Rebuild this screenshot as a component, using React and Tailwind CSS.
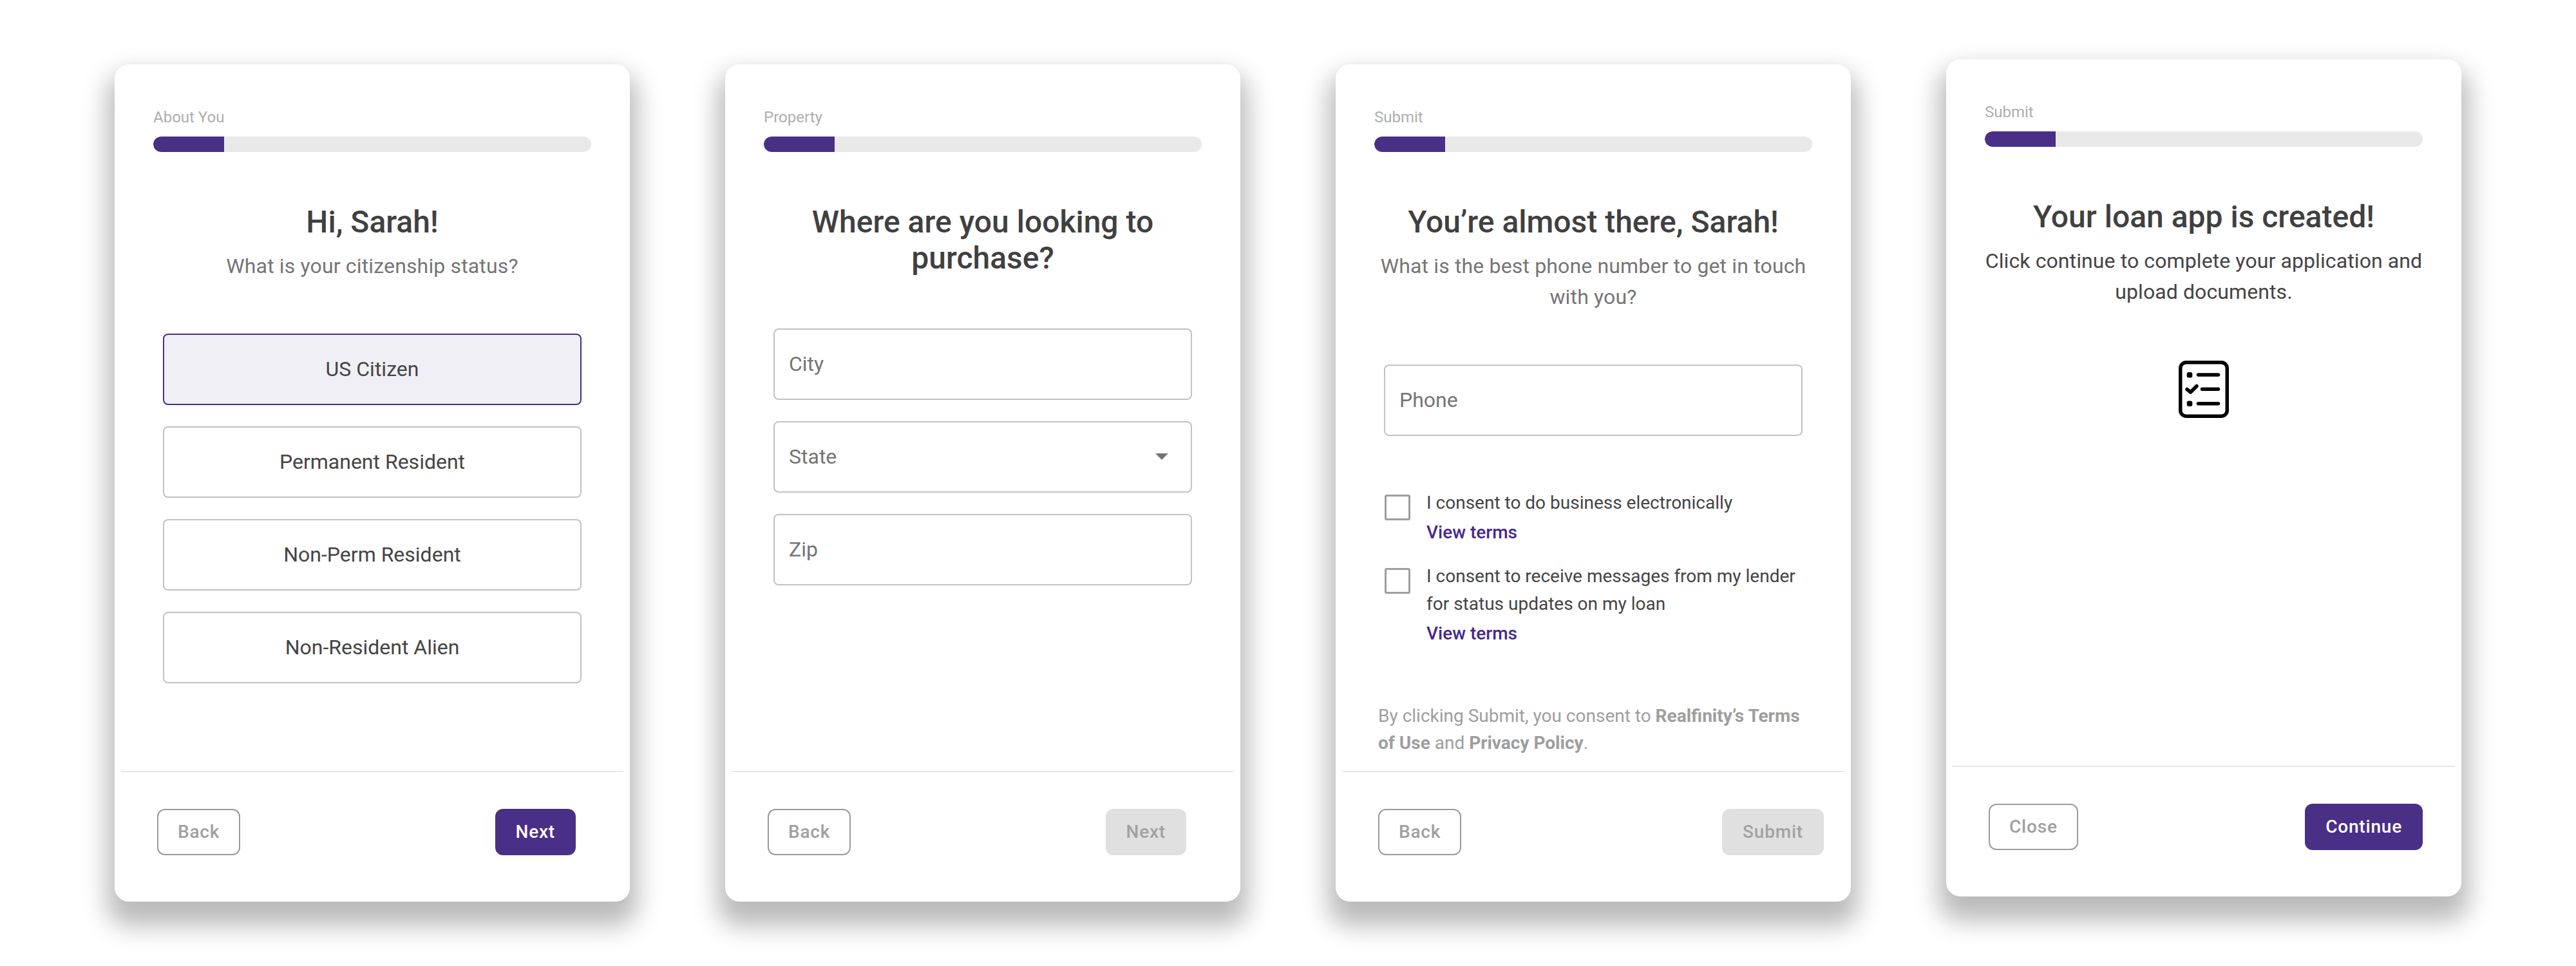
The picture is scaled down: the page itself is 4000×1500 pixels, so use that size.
import React from "react";

const Progress = ({ label }) => (
  <div>
    <div className="h-8 text-[24px] leading-8 text-[#aeaeae]">{label}</div>
    <div className="mt-[14px] h-6 w-full overflow-hidden rounded-xl bg-[#e9e9e9]">
      <div className="h-full w-[110px] rounded-l-xl bg-[#4a2f87]" />
    </div>
  </div>
);

const Heading = ({ title, children, sub = "text-[#757575] tracking-[0.15px]" }) => (
  <div className="mt-[81px] text-center">
    <h1 className="text-[48px] leading-[56px] font-medium text-[#404040]">{title}</h1>
    <p className={`mt-4 text-[32px] leading-[48px] ${sub}`}>{children}</p>
  </div>
);

const Option = ({ children, selected }) => (
  <div
    className={`flex h-[111px] items-center justify-center rounded-lg border-2 pb-0.5 text-[32px] text-[#444444] ${
      selected ? "border-[#4a2f87] bg-[#efeff5]" : "border-[#c2c2c2] bg-white"
    }`}
  >
    {children}
  </div>
);

const Field = ({ children, arrow }) => (
  <div className="flex h-[111px] items-center justify-between rounded-lg border-2 border-[#c2c2c2] pr-[35px] pb-0.5 pl-[22px] text-[32px] text-[#757575]">
    <span>{children}</span>
    {arrow && <span className="h-0 w-0 border-x-[10px] border-t-[10px] border-x-transparent border-t-[#757575]" />}
  </div>
);

const Consent = ({ lines }) => (
  <div className="flex gap-[25px]">
    <div className="mt-[6px] h-10 w-10 shrink-0 rounded-[3px] border-[3px] border-[#9e9e9e]" />
    <div className="-mt-[3px] text-[28px] leading-[43px] text-[#444444]">
      {lines.map((l) => (
        <div key={l}>{l}</div>
      ))}
      <div className="mt-[3px] font-medium text-[#45288c]">View terms</div>
    </div>
  </div>
);

const Footer = ({ left = "Back", right, kind = "primary", rightClass }) => (
  <div>
    <div className="mx-[10px] h-[2px] bg-[#e8e8e8]" />
    <div className={`mt-[57px] mb-[72px] flex items-center justify-between pl-[66px] ${rightClass}`}>
      <button className="flex h-[72px] items-center rounded-xl border-2 border-[#9b9b9b] px-[30px] text-[28px] font-medium tracking-[0.8px] text-[#a0a0a0]">
        {left}
      </button>
      <button
        className={`flex h-[72px] items-center rounded-xl px-8 text-[28px] font-medium tracking-[0.8px] ${
          kind === "primary" ? "bg-[#4a2f87] text-white" : "bg-[#e0e0e0] text-[#a2a2a2]"
        }`}
      >
        {right}
      </button>
    </div>
  </div>
);

const Card = ({ children, className = "" }) => (
  <div
    className={`flex h-[1300px] w-[800px] shrink-0 flex-col rounded-[22px] bg-white pt-[66px] shadow-[0_26px_38px_12px_rgba(0,0,0,0.27)] ${className}`}
  >
    {children}
  </div>
);

const ChecklistIcon = () => (
  <svg viewBox="0 0 78 89" className="h-[89px] w-[78px]" fill="none" stroke="#000" strokeLinecap="round" strokeLinejoin="round">
    <rect x="2.75" y="2.75" width="72.5" height="83.5" rx="9" strokeWidth="5.5" />
    <rect x="12.7" y="18" width="8.6" height="8.6" rx="3" fill="#000" stroke="none" />
    <rect x="12.7" y="62.5" width="8.6" height="8.6" rx="3" fill="#000" stroke="none" />
    <path d="M30.5 22h31M36.5 44.3h25M30.5 66.7h31" strokeWidth="5.5" />
    <path d="M13 44.5l5.5 4.5 9.5-9.5" strokeWidth="5.5" />
  </svg>
);

export default function App() {
  return (
    <div className="flex min-h-[1500px] w-[4000px] items-start gap-[148px] bg-white pt-[100px] pl-[178px] font-[Roboto,sans-serif]">
      <Card>
        <div className="flex-1 px-[60px]">
          <Progress label="About You" />
          <Heading title="Hi, Sarah!">What is your citizenship status?</Heading>
          <div className="mx-[15px] mt-[81px] flex flex-col gap-[33px]">
            <Option selected>US Citizen</Option>
            <Option>Permanent Resident</Option>
            <Option>Non-Perm Resident</Option>
            <Option>Non-Resident Alien</Option>
          </div>
        </div>
        <Footer right="Next" rightClass="pr-[84px]" />
      </Card>

      <Card>
        <div className="flex-1 px-[60px]">
          <Progress label="Property" />
          <div className="mt-[81px] text-center">
            <h1 className="text-[48px] leading-[56px] font-medium text-[#404040]">
              Where are you looking to
              <br />
              purchase?
            </h1>
          </div>
          <div className="mx-[15px] mt-[81px] flex flex-col gap-[33px]">
            <Field>City</Field>
            <Field arrow>State</Field>
            <Field>Zip</Field>
          </div>
        </div>
        <Footer right="Next" kind="disabled" rightClass="pr-[84px]" />
      </Card>

      <Card>
        <div className="flex flex-1 flex-col px-[60px]">
          <Progress label="Submit" />
          <Heading title="You’re almost there, Sarah!">
            What is the best phone number to get in touch
            <br />
            with you?
          </Heading>
          <div className="mx-[15px] mt-[81px]">
            <Field>Phone</Field>
          </div>
          <div className="mx-4 mt-[85px] flex flex-col gap-[28px]">
            <Consent lines={["I consent to do business electronically"]} />
            <Consent lines={["I consent to receive messages from my lender", "for status updates on my loan"]} />
          </div>
          <p className="mt-auto mb-[22px] ml-[6px] text-[28px] leading-[42px] text-[#9e9e9e]">
            By clicking Submit, you consent to <b className="font-bold">Realfinity’s Terms</b>
            <br />
            <b className="font-bold">of Use</b> and <b className="font-bold">Privacy Policy</b>.
          </p>
        </div>
        <Footer right="Submit" kind="disabled" rightClass="pr-[42px]" />
      </Card>

      <Card className="-mt-2">
        <div className="flex flex-1 flex-col items-stretch px-[60px]">
          <Progress label="Submit" />
          <Heading title="Your loan app is created!" sub="text-[#444444] tracking-[0.1px]">
            Click continue to complete your application and
            <br />
            upload documents.
          </Heading>
          <div className="mt-[83px] flex justify-center">
            <ChecklistIcon />
          </div>
        </div>
        <Footer left="Close" right="Continue" rightClass="pr-[60px]" />
      </Card>
    </div>
  );
}
